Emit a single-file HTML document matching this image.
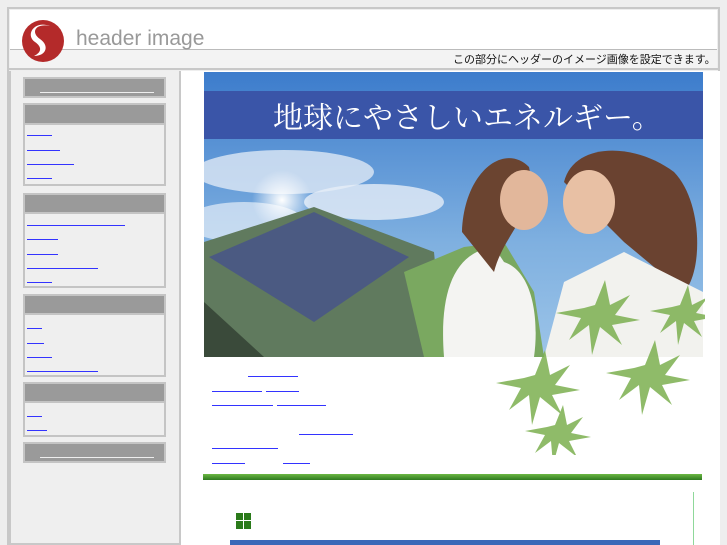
<!DOCTYPE html>
<html><head><meta charset="utf-8"><style>
*{margin:0;padding:0;box-sizing:border-box}
body{width:727px;height:545px;overflow:hidden;background:#eeeeee;position:relative;font-family:"Liberation Sans","Noto Sans CJK JP",sans-serif}
.a{position:absolute}
.bx{position:absolute;left:23px;width:143px;border:2px solid #c4c4c4;background:#efefef}
.hd{background:#9a9a9a;border-bottom:2px solid #c4c4c4}
.ln{position:absolute;height:1px;background:#33f}
</style></head><body>
<div class="a" style="left:7px;top:7px;width:713px;height:538px;border:2px solid #c8c8c8;border-bottom:none"></div>
<div class="a" style="left:10px;top:10px;width:707px;height:59px;background:#fff"></div>
<div class="a" style="left:10px;top:49px;width:707px;height:1px;background:#bbb"></div>
<div class="a" style="left:10px;top:50px;width:707px;height:18px;background:#f3f3f3"></div>
<div class="a" style="left:7px;top:68px;width:713px;height:2px;background:#c8c8c8"></div>
<svg class="a" style="left:20px;top:20px" width="47" height="42" viewBox="0 0 47 42"><circle cx="23" cy="21" r="21" fill="#b42a2a"/><path d="M30 6 C16 3 10 12 20 19 C30 26 26 36 14 36 C22 32 22 27 15 22 C5 15 14 0 30 6Z" fill="#fff"/></svg>
<div class="a" style="left:76px;top:27px;font-size:21px;color:#999">header image</div>
<div class="a" style="left:453px;top:51px;font-size:11px;color:#111">この部分にヘッダーのイメージ画像を設定できます。</div>
<div class="a" style="left:9px;top:71px;width:172px;height:474px;border:2px solid #c8c8c8;border-top:none;background:#efefef"></div>
<div class="a" style="left:181px;top:71px;width:539px;height:474px;background:#fff"></div>
<div class="bx" style="top:77px;height:21px;background:#9a9a9a"><div class="a" style="left:15px;top:13px;width:114px;height:1px;background:#eee"></div></div>
<div class="bx" style="top:103px;height:83px"><div class="hd" style="height:20px"></div>
<div class="ln" style="left:2px;top:30px;width:25px"></div><div class="ln" style="left:2px;top:45px;width:33px"></div><div class="ln" style="left:2px;top:59px;width:47px"></div><div class="ln" style="left:2px;top:73px;width:25px"></div></div>
<div class="bx" style="top:193px;height:95px"><div class="hd" style="height:19px"></div>
<div class="ln" style="left:2px;top:30px;width:98px"></div><div class="ln" style="left:2px;top:44px;width:31px"></div><div class="ln" style="left:2px;top:59px;width:31px"></div><div class="ln" style="left:2px;top:73px;width:71px"></div><div class="ln" style="left:2px;top:87px;width:25px"></div></div>
<div class="bx" style="top:294px;height:83px"><div class="hd" style="height:19px"></div>
<div class="ln" style="left:2px;top:32px;width:15px"></div><div class="ln" style="left:2px;top:47px;width:17px"></div><div class="ln" style="left:2px;top:61px;width:25px"></div><div class="ln" style="left:2px;top:75px;width:71px"></div></div>
<div class="bx" style="top:382px;height:55px"><div class="hd" style="height:19px"></div>
<div class="ln" style="left:2px;top:32px;width:15px"></div><div class="ln" style="left:2px;top:46px;width:20px"></div></div>
<div class="bx" style="top:442px;height:21px;background:#9a9a9a"><div class="a" style="left:15px;top:13px;width:114px;height:1px;background:#eee"></div></div>
<svg class="a" style="left:204px;top:72px" width="499" height="285" viewBox="0 0 499 285">
<defs><linearGradient id="s" x1="0" y1="0" x2="0" y2="1"><stop offset="0" stop-color="#3c7ccc"/><stop offset=".6" stop-color="#7fb0e0"/><stop offset="1" stop-color="#9cc4e8"/></linearGradient>
<radialGradient id="sun" cx="0.5" cy="0.5" r="0.5"><stop offset="0" stop-color="#fff"/><stop offset="1" stop-color="#fff" stop-opacity="0"/></radialGradient></defs>
<rect width="499" height="285" fill="url(#s)"/>
<ellipse cx="80" cy="100" rx="90" ry="22" fill="#dfe9f5" opacity=".8"/><ellipse cx="170" cy="130" rx="70" ry="18" fill="#e6eef8" opacity=".8"/><ellipse cx="40" cy="150" rx="60" ry="20" fill="#e6eef8" opacity=".7"/>
<circle cx="78" cy="128" r="30" fill="url(#sun)"/>
<rect x="0" y="19" width="499" height="48" fill="#3a55a8"/>
<text x="69" y="56" font-family="Noto Serif CJK SC,serif" font-size="30" fill="#fff">地球にやさしいエネルギー。</text>
<path d="M0 170 L110 135 L230 180 L240 285 L0 285Z" fill="#607a5e"/>
<path d="M5 185 L110 140 L205 185 L110 250Z" fill="#4b5a82"/>
<path d="M0 230 L60 285 L0 285Z" fill="#3a4a3a"/>
<path d="M220 285 L200 200 L260 175 L300 170 L330 220 L340 285Z" fill="#7aa860"/>
<path d="M240 285 C235 220 250 180 290 175 L300 190 C330 200 335 250 330 285Z" fill="#f4f4f2"/>
<path d="M258 160 C260 100 300 70 325 95 C335 140 300 160 290 200 Z" fill="#6b4430"/>
<ellipse cx="320" cy="128" rx="24" ry="30" fill="#e2b79b"/>
<path d="M360 110 C370 70 430 70 470 100 C499 130 499 200 480 220 L420 170Z" fill="#6a4230"/>
<ellipse cx="385" cy="130" rx="26" ry="32" fill="#e8c0a4"/>
<path d="M340 285 L360 210 L420 180 L499 220 L499 285Z" fill="#f2f2ee"/>
</svg>
<svg class="a" style="left:495px;top:275px" width="210" height="180" viewBox="0 0 210 180" opacity=".85">
<g fill="#7cb050"><path d="M100 30 l10 -25 l5 25 l20 -10 l-15 20 l25 5 l-28 5 l10 20 l-22 -18 l-8 28 l-3 -30 l-20 15 l12 -22 l-25 -5 l28 -5Z"/>
<path d="M40 100 l10 -25 l5 25 l20 -10 l-15 20 l25 5 l-28 5 l10 20 l-22 -18 l-8 28 l-3 -30 l-20 15 l12 -22 l-25 -5 l28 -5Z"/>
<path d="M150 90 l10 -25 l5 25 l20 -10 l-15 20 l25 5 l-28 5 l10 20 l-22 -18 l-8 28 l-3 -30 l-20 15 l12 -22 l-25 -5 l28 -5Z"/>
<path d="M60 150 l8 -20 l4 20 l16 -8 l-12 16 l20 4 l-22 4 l8 16 l-18 -14 l-6 22 l-2 -24 l-16 12 l10 -18 l-20 -4 l22 -4Z"/>
<path d="M185 30 l8 -20 l4 20 l16 -8 l-12 16 l20 4 l-22 4 l8 16 l-18 -14 l-6 22 l-2 -24 l-16 12 l10 -18 l-20 -4 l22 -4Z"/></g></svg>
<div class="ln" style="left:248px;top:376px;width:50px"></div>
<div class="ln" style="left:212px;top:391px;width:50px"></div><div class="ln" style="left:266px;top:391px;width:33px"></div>
<div class="ln" style="left:212px;top:405px;width:61px"></div><div class="ln" style="left:277px;top:405px;width:49px"></div>
<div class="ln" style="left:299px;top:434px;width:54px"></div>
<div class="ln" style="left:212px;top:448px;width:66px"></div>
<div class="ln" style="left:212px;top:463px;width:33px"></div><div class="ln" style="left:283px;top:463px;width:27px"></div>
<div class="a" style="left:203px;top:474px;width:499px;height:6px;background:linear-gradient(#6cb844,#2f7a20)"></div>
<div class="a" style="left:693px;top:492px;width:1px;height:53px;background:#8fd89a"></div>
<div class="a" style="left:236px;top:513px;width:16px;height:16px;background:repeating-linear-gradient(90deg,#2a7a1a 0 7px,#fff 7px 8px)"></div>
<div class="a" style="left:236px;top:520px;width:16px;height:1px;background:#fff"></div>
<div class="a" style="left:230px;top:540px;width:430px;height:5px;background:#3a68b8"></div>
</body></html>
